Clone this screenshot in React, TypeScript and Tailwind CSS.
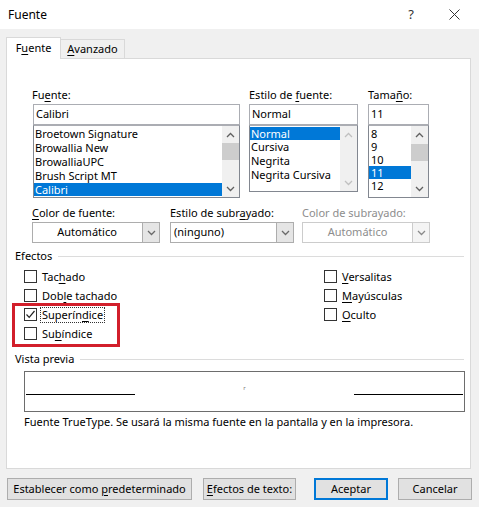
import React from "react";

const U = ({ children }: { children: React.ReactNode }) => (
  <span className="underline underline-offset-2 decoration-1">{children}</span>
);

const Chevron = ({ up, color = "#606060" }: { up?: boolean; color?: string }) => (
  <svg width="9" height="6" viewBox="0 0 9 6">
    <path
      d={up ? "M1 5 L4.5 1.5 L8 5" : "M1 1 L4.5 4.5 L8 1"}
      fill="none"
      stroke={color}
      strokeWidth="1.3"
    />
  </svg>
);

const ScrollBar = ({
  disabled,
  thumbTop,
  thumbH,
}: {
  disabled?: boolean;
  thumbTop?: number;
  thumbH?: number;
}) => (
  <div className="w-[17px] self-stretch bg-[#f0f0f0] flex flex-col items-center">
    <div className="h-[17px] w-full flex items-center justify-center">
      <Chevron up color={disabled ? "#c0c0c0" : "#606060"} />
    </div>
    <div className="flex-1 w-full relative">
      {!disabled && (
        <div
          className="absolute left-0 w-full bg-[#cdcdcd]"
          style={{ top: thumbTop, height: thumbH }}
        />
      )}
    </div>
    <div className="h-[17px] w-full flex items-center justify-center">
      <Chevron color={disabled ? "#c0c0c0" : "#606060"} />
    </div>
  </div>
);

const Check = ({ checked }: { checked?: boolean }) => (
  <div className="w-[13px] h-[13px] border border-[#333333] bg-white flex items-center justify-center shrink-0">
    {checked && (
      <svg width="11" height="11" viewBox="0 0 11 11">
        <path d="M1.5 5.5 L4.2 8.3 L9.5 2" fill="none" stroke="#222" strokeWidth="1.2" />
      </svg>
    )}
  </div>
);

const CheckRow = ({
  children,
  checked,
  focus,
}: {
  children: React.ReactNode;
  checked?: boolean;
  focus?: boolean;
}) => (
  <div className="h-[19px] flex items-center whitespace-nowrap">
    <Check checked={checked} />
    <span
      className={
        "ml-[4px] leading-[14px] px-[1px] " +
        (focus ? "outline outline-1 outline-dotted outline-[#333]" : "")
      }
    >
      {children}
    </span>
  </div>
);

const Combo = ({
  children,
  w,
  center,
  disabled,
}: {
  children: React.ReactNode;
  w: string;
  center?: boolean;
  disabled?: boolean;
}) => (
  <div
    className={
      "h-[21px] border flex whitespace-nowrap " +
      w +
      (disabled ? " border-[#cccccc] bg-white" : " border-[#adadad] bg-white")
    }
  >
    <div
      className={
        "flex-1 flex items-center " +
        (center ? "justify-center" : "pl-[3px]") +
        (disabled ? " text-[#8d8d8d]" : "")
      }
    >
      {children}
    </div>
    <div
      className={
        "w-[17px] flex items-center justify-center border-l " +
        (disabled ? "bg-[#f4f4f4] border-[#cccccc]" : "bg-[#e5e5e5] border-[#adadad]")
      }
    >
      <Chevron color={disabled ? "#8a8a8a" : "#6a6a6a"} />
    </div>
  </div>
);

const Button = ({
  children,
  w,
  primary,
}: {
  children: React.ReactNode;
  w: string;
  primary?: boolean;
}) => (
  <div
    className={
      "h-[22px] bg-[#e1e1e1] flex items-center justify-center whitespace-nowrap " +
      w +
      (primary ? " border-2 border-[#0078d7]" : " border border-[#adadad]")
    }
  >
    {children}
  </div>
);

export default function App() {
  return (
    <div
      className="w-[479px] h-[507px] bg-[#f0f0f0] flex flex-col text-[11px] text-black relative overflow-hidden"
      style={{ fontFamily: '"Noto Sans", "Open Sans", sans-serif' }}
    >
      {/* title bar */}
      <div className="h-[29px] bg-white flex items-center pl-[8px] shrink-0">
        <span className="text-[12px]">Fuente</span>
        <span className="ml-auto mr-[35px] text-[13px] text-[#333]">?</span>
        <svg width="11" height="11" viewBox="0 0 11 11" className="mr-[19px]">
          <path d="M0.5 0.5 L10.5 10.5 M10.5 0.5 L0.5 10.5" stroke="#333" strokeWidth="1" />
        </svg>
      </div>

      {/* tabs */}
      <div className="h-[29px] flex items-end pl-[6px] shrink-0">
        <div className="h-[22px] w-[55px] bg-white border-l border-t border-r border-[#d9d9d9] -mb-px relative z-10 flex items-center justify-center">
          <span>
            F<U>u</U>ente
          </span>
        </div>
        <div className="h-[19px] w-[64px] border-t border-r border-[#d9d9d9] flex items-center justify-center">
          <span>
            <U>A</U>vanzado
          </span>
        </div>
      </div>

      {/* panel */}
      <div className="ml-[6px] w-[465px] h-[411px] bg-white border border-[#d9d9d9] flex flex-col shrink-0">
        {/* font row */}
        <div className="flex pl-[26px] mt-[28px]">
          <div className="w-[207px] flex flex-col">
            <div className="h-[16px] leading-[16px] -ml-px mb-px">
              Fu<U>e</U>nte:
            </div>
            <div className="h-[21px] border border-[#abadb3] flex items-center pl-[2px]">Calibri</div>
            <div className="h-[73px] border border-[#828790] border-t-[#abadb3] flex">
              <div className="flex-1 flex flex-col pt-px">
                {["Broetown Signature", "Browallia New", "BrowalliaUPC", "Brush Script MT"].map((t) => (
                  <div key={t} className="h-[14px] leading-[14px] pl-[1px]">
                    {t}
                  </div>
                ))}
                <div className="h-[13px] leading-[13px] pl-[1px] bg-[#0078d7] text-white">Calibri</div>
              </div>
              <ScrollBar thumbTop={0} thumbH={17} />
            </div>
          </div>

          <div className="w-[109px] ml-[9px] flex flex-col">
            <div className="h-[16px] leading-[16px] mb-px">
              Estilo de <U>f</U>uente:
            </div>
            <div className="h-[21px] border border-[#abadb3] flex items-center pl-[2px]">Normal</div>
            <div className="h-[67px] border border-[#828790] border-t-[#abadb3] flex">
              <div className="flex-1 flex flex-col pt-px">
                <div className="h-[13px] leading-[13px] pl-[1px] bg-[#0078d7] text-white">Normal</div>
                {["Cursiva", "Negrita", "Negrita Cursiva"].map((t) => (
                  <div key={t} className="h-[14px] leading-[14px] pl-[1px] whitespace-nowrap">
                    {t}
                  </div>
                ))}
              </div>
              <ScrollBar disabled />
            </div>
          </div>

          <div className="w-[61px] ml-[10px] flex flex-col">
            <div className="h-[16px] leading-[16px] mb-px">
              Tama<U>ñ</U>o:
            </div>
            <div className="h-[21px] border border-[#abadb3] flex items-center pl-[2px]">11</div>
            <div className="h-[73px] border border-[#828790] border-t-[#abadb3] flex">
              <div className="flex-1 flex flex-col pt-[1px]">
                {["8", "9", "10"].map((t) => (
                  <div key={t} className="h-[13px] leading-[13px] pl-[2px]">
                    {t}
                  </div>
                ))}
                <div className="h-[13px] leading-[13px] pl-[2px] bg-[#0078d7] text-white">11</div>
                <div className="h-[13px] leading-[13px] pl-[2px]">12</div>
              </div>
              <ScrollBar thumbTop={1} thumbH={17} />
            </div>
          </div>
        </div>

        {/* color row */}
        <div className="flex pl-[25px] mt-[7px]">
          <div className="flex flex-col w-[128px]">
            <div className="h-[16px] leading-[16px] mb-px">
              <U>C</U>olor de fuente:
            </div>
            <Combo w="w-[128px]" center>
              <span className="pr-[1px]">Automático</span>
            </Combo>
          </div>
          <div className="flex flex-col w-[124px] ml-[10px]">
            <div className="h-[16px] leading-[16px] mb-px">
              Estilo de subr<U>a</U>yado:
            </div>
            <Combo w="w-[124px]">(ninguno)</Combo>
          </div>
          <div className="flex flex-col w-[128px] ml-[8px]">
            <div className="h-[16px] leading-[16px] mb-px text-[#8d8d8d]">Color de subrayado:</div>
            <Combo w="w-[128px]" center disabled>
              Automático
            </Combo>
          </div>
        </div>

        {/* Efectos */}
        <div className="flex items-center pl-[8px] pr-[6px] mt-[5px] h-[16px]">
          <span>Efectos</span>
          <div className="flex-1 h-px bg-[#dcdcdc] ml-[6px]" />
        </div>
        <div className="flex pl-[17px] mt-[3px]">
          <div className="w-[300px] flex flex-col">
            <CheckRow>
              Tac<U>h</U>ado
            </CheckRow>
            <CheckRow>
              Dob<U>l</U>e tachado
            </CheckRow>
            <CheckRow checked focus>
              Superín<U>d</U>ice
            </CheckRow>
            <CheckRow>
              Su<U>b</U>índice
            </CheckRow>
          </div>
          <div className="flex flex-col">
            <CheckRow>
              <U>V</U>ersalitas
            </CheckRow>
            <CheckRow>
              <U>M</U>ayúsculas
            </CheckRow>
            <CheckRow>
              <U>O</U>culto
            </CheckRow>
          </div>
        </div>

        {/* Vista previa */}
        <div className="flex items-center pl-[8px] pr-[6px] mt-[8px] h-[16px]">
          <span>Vista previa</span>
          <div className="flex-1 h-px bg-[#dcdcdc] ml-[6px]" />
        </div>
        <div className="ml-[17px] mt-[4px] w-[441px] h-[41px] border border-[#6d6d6d] flex items-start pt-[22px] px-px">
          <div className="w-[109px] h-px bg-black" />
          <div className="flex-1 flex justify-center">
            <span className="text-[6px] leading-[6px] text-[#777] -mt-[9px]">r</span>
          </div>
          <div className="w-[109px] h-px bg-black" />
        </div>
        <div className="ml-[17px] mt-[2px] h-[16px] leading-[16px] whitespace-nowrap">
          Fuente TrueType. Se usará la misma fuente en la pantalla y en la impresora.
        </div>
      </div>

      {/* buttons */}
      <div className="flex pl-[7px] mt-[9px]">
        <Button w="w-[185px]">
          <span>
            Establecer como <U>p</U>redeterminado
          </span>
        </Button>
        <Button w="w-[93px] ml-[11px]">
          <span>
            <U>E</U>fectos de texto:
          </span>
        </Button>
        <Button w="w-[74px] ml-[18px]" primary>
          Aceptar
        </Button>
        <Button w="w-[74px] ml-[10px]">Cancelar</Button>
      </div>

      {/* red annotation box */}
      <div className="absolute left-[12px] top-[303px] w-[108px] h-[44px] border-[3px] border-[#d21f2b]" />
    </div>
  );
}
